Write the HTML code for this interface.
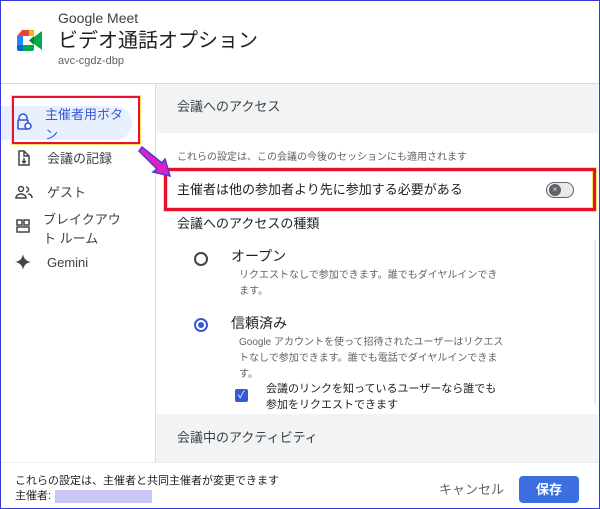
<!DOCTYPE html>
<html><head><meta charset="utf-8"><style>
*{margin:0;padding:0;box-sizing:border-box}
body{width:600px;height:509px;overflow:hidden;background:#fff;font-family:"Liberation Sans","Noto Sans CJK JP",sans-serif;color:#202124;position:relative}
.frame{position:absolute;inset:0;border:1px solid #3a3ad8;pointer-events:none;z-index:9}
.abs{position:absolute}
.t{white-space:nowrap;line-height:1.2}
</style></head><body>
<div class="frame"></div>
<!-- header -->
<svg class="abs" style="left:17px;top:30px" width="26" height="21" viewBox="0 0 26 21">
<path d="M5 0h12v6H0z" fill="#ea4335"/>
<path d="M12 0h3a2 2 0 0 1 2 2v4h-5z" fill="#fbbc04"/>
<path d="M0 6h6v9H0z" fill="#2684fc"/>
<path d="M0 15h6v6H2a2 2 0 0 1-2-2z" fill="#0066da"/>
<path d="M6 15h11v4a2 2 0 0 1-2 2H6z" fill="#00ac47"/>
<path d="M17 7l8-6v19l-8-6z" fill="#00ac47"/>
<path d="M17 6v9l-5-4.5z" fill="#00832d"/>
<path d="M6 6h6v9H6z" fill="#fff"/>
</svg>
<div class="abs t" style="left:58px;top:10px;font-size:14px;color:#3c4043">Google Meet</div>
<div class="abs t" style="left:58px;top:29px;font-size:20px;color:#202124">ビデオ通話オプション</div>
<div class="abs t" style="left:58px;top:55px;font-size:11px;color:#5f6368">avc-cgdz-dbp</div>
<div class="abs" style="left:0;top:83px;width:600px;height:1px;background:#dadce0"></div>
<!-- sidebar -->
<div class="abs" style="left:0;top:106px;width:132px;height:34px;background:#e8f0fe;border-radius:0 17px 17px 0"></div>
<div class="abs" style="left:12px;top:96px;width:128px;height:48px;border:2px solid #e8102d;box-shadow:0 0 0 1px #ffe066"></div>
<svg class="abs" style="left:16px;top:113px" width="16" height="18" viewBox="0 0 16 18" fill="none" stroke="#3858d6" stroke-width="1.6"><path d="M3 7V5a4 4 0 0 1 8 0v2"/><rect x="2" y="7" width="10" height="9" rx="1"/><circle cx="12" cy="13" r="3" fill="#fff"/></svg>
<div class="abs" style="left:45px;top:105px;font-size:13px;line-height:20px;color:#3858d6;width:90px">主催者用ボタ<br>ン</div>
<svg class="abs" style="left:16px;top:149px" width="16" height="18" viewBox="0 0 16 18" fill="none" stroke="#444" stroke-width="1.5"><path d="M8 2H3v14h10V7zM8 2v5h5"/><path d="M8 9v5m-2-2l2 2 2-2"/></svg>
<div class="abs t" style="left:47px;top:151px;font-size:13px;color:#3c4043">会議の記録</div>
<svg class="abs" style="left:15px;top:185px" width="18" height="14" viewBox="0 0 18 14" fill="none" stroke="#444" stroke-width="1.5"><circle cx="6" cy="4" r="2.5"/><path d="M1 13c0-3 3-4 5-4s5 1 5 4z"/><path d="M11 2a2.5 2.5 0 0 1 0 5M13 9c2 0 4 1 4 4"/></svg>
<div class="abs t" style="left:47px;top:185px;font-size:13px;color:#3c4043">ゲスト</div>
<svg class="abs" style="left:16px;top:219px" width="14" height="14" viewBox="0 0 14 14" fill="none" stroke="#444" stroke-width="1.5"><rect x="1" y="1" width="5" height="5"/><rect x="8" y="1" width="5" height="5"/><rect x="1" y="8" width="12" height="5"/></svg>
<div class="abs" style="left:43px;top:210px;font-size:13px;line-height:19px;color:#3c4043">ブレイクアウ<br>ト ルーム</div>
<svg class="abs" style="left:15px;top:254px" width="16" height="16" viewBox="0 0 16 16"><path d="M8 0Q9 7 16 8Q9 9 8 16Q7 9 0 8Q7 7 8 0z" fill="#444"/></svg>
<div class="abs t" style="left:47px;top:255px;font-size:13px;color:#3c4043">Gemini</div>
<div class="abs" style="left:155px;top:84px;width:1px;height:378px;background:#dadce0"></div>
<!-- right panel -->
<div class="abs" style="left:156px;top:84px;width:442px;height:49px;background:#f1f3f4"></div>
<div class="abs t" style="left:177px;top:99px;font-size:13px;color:#3c4043">会議へのアクセス</div>
<div class="abs t" style="left:177px;top:152px;font-size:10px;color:#5f6368">これらの設定は、この会議の今後のセッションにも適用されます</div>
<div class="abs" style="left:164px;top:168px;width:432px;height:43px;border:3px solid #e8102d;box-shadow:0 0 0 1px #ffe066, inset 0 0 0 1px #ffe066"></div>
<div class="abs t" style="left:177px;top:182px;font-size:13px;color:#202124">主催者は他の参加者より先に参加する必要がある</div>
<div class="abs" style="left:546px;top:182px;width:28px;height:16px;border-radius:8px;background:#e8eaed;border:1.5px solid #5f6368"></div>
<div class="abs" style="left:549px;top:184px;width:12px;height:12px;border-radius:6px;background:#5f6368;color:#e8eaed;font-size:8px;line-height:12px;text-align:center">×</div>
<div class="abs t" style="left:177px;top:216px;font-size:13px;color:#202124">会議へのアクセスの種類</div>
<div class="abs" style="left:194px;top:252px;width:14px;height:14px;border-radius:50%;border:2px solid #444"></div>
<div class="abs t" style="left:231px;top:248px;font-size:14px;color:#202124">オープン</div>
<div class="abs" style="left:239px;top:268px;font-size:10px;line-height:16px;color:#5f6368;width:262px">リクエストなしで参加できます。誰でもダイヤルインできます。</div>
<div class="abs" style="left:194px;top:318px;width:14px;height:14px;border-radius:50%;border:2px solid #3858d6"></div>
<div class="abs" style="left:198px;top:322px;width:6px;height:6px;border-radius:50%;background:#3858d6"></div>
<div class="abs t" style="left:231px;top:315px;font-size:14px;color:#202124">信頼済み</div>
<div class="abs" style="left:239px;top:335px;font-size:10px;line-height:16px;color:#5f6368;width:265px">Google アカウントを使って招待されたユーザーはリクエストなしで参加できます。誰でも電話でダイヤルインできます。</div>
<div class="abs" style="left:235px;top:389px;width:13px;height:13px;border-radius:2px;background:#3858d6;color:#fff;font-size:10px;line-height:13px;text-align:center">✓</div>
<div class="abs" style="left:266px;top:381px;font-size:11px;line-height:16px;color:#202124;width:240px">会議のリンクを知っているユーザーなら誰でも<br>参加をリクエストできます</div>
<div class="abs" style="left:594px;top:240px;width:2px;height:165px;background:#e8eaed"></div>
<div class="abs" style="left:156px;top:414px;width:442px;height:48px;background:#f1f3f4"></div>
<div class="abs t" style="left:177px;top:430px;font-size:13px;color:#3c4043">会議中のアクティビティ</div>
<div class="abs" style="left:0;top:462px;width:600px;height:1px;background:#eee"></div>
<!-- footer -->
<div class="abs t" style="left:15px;top:475px;font-size:11px;color:#202124">これらの設定は、主催者と共同主催者が変更できます</div>
<div class="abs t" style="left:15px;top:490px;font-size:11px;color:#202124">主催者:</div>
<div class="abs" style="left:55px;top:490px;width:97px;height:13px;background:#c9c6f7"></div>
<div class="abs t" style="left:439px;top:482px;font-size:13px;color:#5f6368">キャンセル</div>
<div class="abs" style="left:519px;top:476px;width:60px;height:27px;border-radius:4px;background:#3b6fe0;color:#fff;font-size:13px;font-weight:bold;line-height:27px;text-align:center">保存</div>
<!-- arrow -->
<svg class="abs" style="left:138px;top:143px;z-index:8" width="36" height="36" viewBox="0 0 36 36"><path d="M4 4L24 20L27 16L32 33L15 29L19 26L1 8z" fill="#e020c0" stroke="#4a3bd8" stroke-width="1.5"/></svg>
</body></html>
